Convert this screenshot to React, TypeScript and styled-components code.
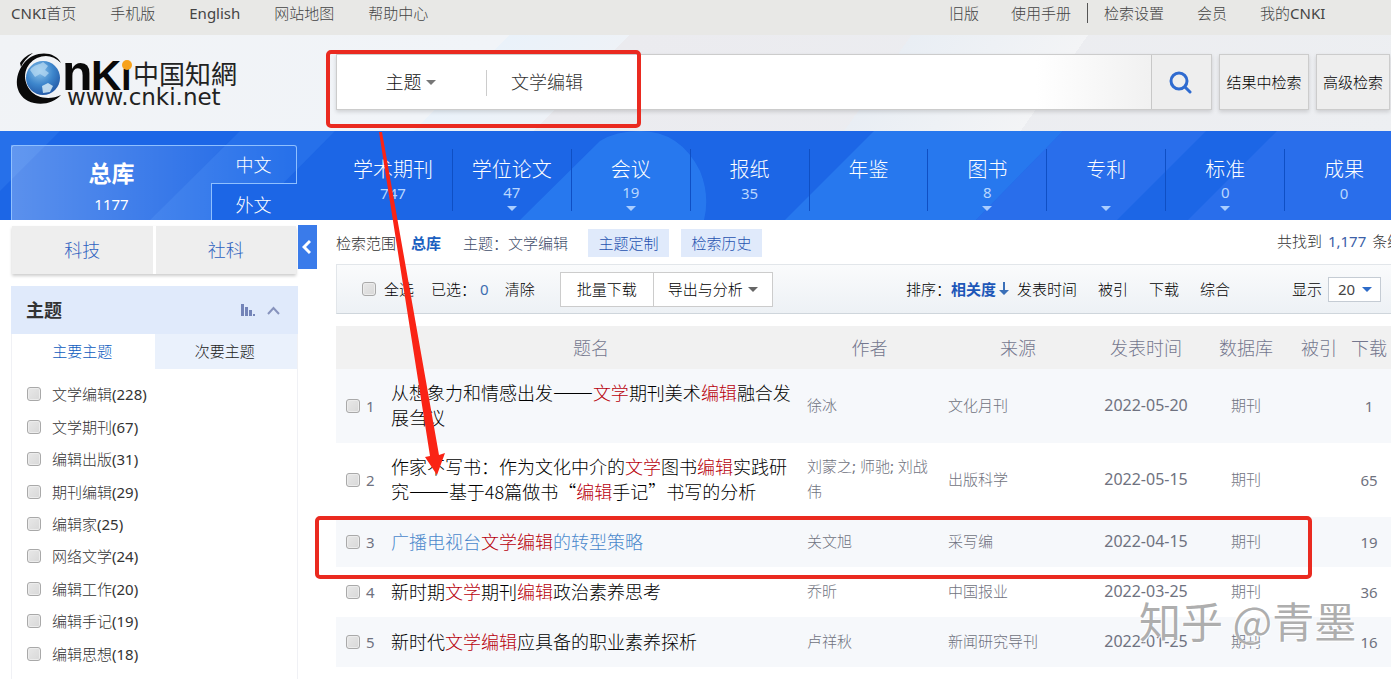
import React from "react";
import styled, { createGlobalStyle, css } from "styled-components";

const boldFamily = `"Noto Sans", "Noto Sans CJK SC", sans-serif`;

const GlobalStyle = createGlobalStyle`
  * { box-sizing: border-box; }
  body {
    margin: 0;
    background: #fff;
    color: #333;
    font-family: "Noto Sans", "Noto Sans CJK SC Light", "Noto Sans CJK SC", sans-serif;
    font-size: 15px;
    line-height: 20px;
  }
  #root { overflow: hidden; }
  button, input, select { font: inherit; color: inherit; }
  button { cursor: pointer; padding: 0; border: 0; background: none; }
  a { color: inherit; text-decoration: none; }
  strong, h2 { font-family: ${boldFamily}; font-weight: 700; }
`;

const Page = styled.div`
  position: relative;
  display: flex;
  flex-direction: column;
  min-width: 1403px;
  min-height: 100vh;
  white-space: nowrap;
`;

/* ---------- top bar ---------- */

const TopBar = styled.div`
  display: flex;
  justify-content: space-between;
  height: 35px;
  padding: 3px 0 0 11px;
  background: #e8e8e6;
  color: #444;
`;

const TopLinks = styled.nav<{ $gap: number }>`
  display: flex;
  gap: ${(p) => p.$gap}px;
  height: 20px;
`;

const TopRight = styled.div`
  display: flex;
  gap: 16px;
  width: 454px;
  height: 20px;
`;

const Rule = styled.span`
  width: 1px;
  background: #555;
`;

/* ---------- header ---------- */

const Header = styled.header`
  display: flex;
  align-items: flex-start;
  height: 96px;
  padding: 19px 13px 0 15px;
  background:
    linear-gradient(125deg, transparent 62%, #e9eef4 62%, #f3f4f6 74%, transparent 74%),
    linear-gradient(135deg, #f1f3f6 0%, #f1f4f8 34%, #eaf2fa 34%, #eef2f7 42%, #ebebef 42%, #edeff2 100%);
`;

const Logo = styled.svg`
  flex: none;
  width: 232px;
  height: 60px;
  margin: -4px 89px 0 0;
  overflow: visible;
`;

const SearchBox = styled.form`
  display: flex;
  flex: 1;
  height: 56px;
  border: 1px solid #ccc;
  background: linear-gradient(90deg, #fff 80%, #f0f0f0 94%);
  box-shadow: 0 2px 4px rgba(0, 0, 0, 0.14);
`;

const FieldPicker = styled.button`
  display: flex;
  align-items: center;
  justify-content: center;
  gap: 4px;
  width: 149px;
  padding-right: 2px;
  color: #111;
  font-size: 18px;
`;

const Caret = styled.span<{ $color: string }>`
  border: 5px solid transparent;
  border-top-color: ${(p) => p.$color};
  border-bottom: 0;
`;

const QueryInput = styled.input`
  flex: 1;
  min-width: 0;
  height: 26px;
  margin-top: 15px;
  padding: 0 24px 4px;
  border: 0;
  border-left: 1px solid #ccc;
  background: none;
  color: #333;
  font-size: 18px;
  outline: none;
`;

const SearchButton = styled.button`
  display: flex;
  align-items: center;
  justify-content: center;
  width: 60px;
  padding-right: 4px;
  border-left: 1px solid #c8c8c8;
  background: #eee;
`;

const SideButton = styled.button<{ $width: number }>`
  width: ${(p) => p.$width}px;
  height: 56px;
  margin-left: 7px;
  border: 1px solid #ccc;
  background: #eee;
  color: #000;
  box-shadow: 0 2px 4px rgba(0, 0, 0, 0.14);
`;

/* ---------- blue navigation ---------- */

const Banner = styled.div`
  position: relative;
  display: flex;
  height: 89px;
  background: #1c66e6;
  color: #fff;
`;

const BannerArt = styled.svg`
  position: absolute;
  inset: 0;
  width: 100%;
  height: 100%;
`;

const TotalBox = styled.div`
  position: relative;
  display: flex;
  width: 286px;
  height: 75px;
  margin: 14px 37px 0 11px;
  background: linear-gradient(90deg, rgba(255, 255, 255, 0.28), rgba(255, 255, 255, 0));
`;

const TotalMain = styled.a`
  display: flex;
  flex-direction: column;
  align-items: center;
  width: 200px;
  padding-top: 14px;
  border: 1px solid #8fc0ff;
  border-width: 1px 0 0 1px;
  border-radius: 3px 0 0 0;

  strong { font-size: 23px; line-height: 26px; }
  span { margin-top: 8px; }
`;

const LangTabs = styled.div`
  flex: 1;
`;

const LangTab = styled.button<{ $active?: boolean }>`
  display: block;
  width: 100%;
  height: ${(p) => (p.$active ? 39 : 36)}px;
  color: #fff;
  font-size: 18px;
  border: 0 solid #8fc0ff;
  ${(p) =>
    p.$active
      ? css`border-width: 1px 1px 1px 0; border-radius: 0 3px 0 0;`
      : css`border-left-width: 1px; background: #1c66e6; padding: 6px 2px 0 0;`}
`;

const DbNav = styled.nav`
  position: relative;
  display: flex;
  flex: 1;
`;

const DbItem = styled.a`
  display: flex;
  flex: 1 1 0;
  flex-direction: column;
  align-items: center;
  height: 62px;
  margin-top: 18px;
  padding-top: 9px;
  color: #b9d7ff;

  & + & { border-left: 1px solid #0f4fc4; }
  b { height: 25px; color: #fff; font-size: 20px; line-height: 24px; font-weight: 400; }
  span { height: 25px; }
  i { border: 5px solid transparent; border-top-color: #a9cdff; border-bottom: 0; }
`;

/* ---------- body ---------- */

const Body = styled.div`
  display: flex;
  flex: 1;
  align-items: stretch;
`;

const Sidebar = styled.aside`
  display: flex;
  flex-direction: column;
  width: 287px;
  margin-left: 11px;
  padding-top: 6px;
`;

const DomainTabs = styled.div`
  display: flex;
  gap: 3px;
  height: 48px;
  margin: 0 2px 12px 1px;
  box-shadow: 0 2px 3px rgba(0, 0, 0, 0.2);

  button { flex: 1; background: #eee; color: #2f62c0; font-size: 18px; }
`;

const Facet = styled.section`
  flex: 1;
  border: 1px solid #f0f1f5;
  border-width: 0 1px;
`;

const FacetHead = styled.div`
  display: flex;
  align-items: center;
  gap: 11px;
  height: 48px;
  margin: 0 -1px;
  padding: 0 18px 0 15px;
  background: #e0eafb;

  h2 { flex: 1; margin: 0; color: #333; font-size: 18px; }
`;

const FacetTabs = styled.div`
  display: flex;
  height: 35px;
`;

const FacetTab = styled.button<{ $active?: boolean }>`
  flex: 1;
  padding: 0 2px 2px 0;
  background: ${(p) => (p.$active ? "#fff" : "#eaf1fc")};
  color: ${(p) => (p.$active ? "#0e5cbe" : "#222")};
`;

const FacetList = styled.ul`
  display: grid;
  grid-auto-rows: 1fr;
  height: 292px;
  margin: 9px 0 0;
  padding: 0 15px;
  list-style: none;

  label { display: flex; align-items: center; height: 100%; }
`;

const Check = styled.input.attrs({ type: "checkbox" })`
  appearance: none;
  flex: none;
  width: 14px;
  height: 14px;
  margin: 0;
  border: 1px solid #a9a9a9;
  border-radius: 3px;
  background: linear-gradient(135deg, #e8e8e8, #d8d8d8);
  box-shadow: inset 0 0 0 1px #ececec;
`;

const FacetText = styled.span`
  margin-left: 11px;
`;

const Collapse = styled.button`
  display: flex;
  align-items: center;
  justify-content: center;
  align-self: flex-start;
  width: 19px;
  height: 44px;
  margin: 5px 19px 0 0;
  padding-right: 2px;
  background: #3a7bea;
`;

const Main = styled.main`
  display: flex;
  flex: 1;
  flex-direction: column;
  min-width: 0;
  padding-right: 7px;
`;

const ScopeRow = styled.div`
  display: flex;
  align-items: center;
  height: 44px;
  padding-top: 2px;
`;

const ScopeTotal = styled.a`
  margin: 0 22px 0 15px;
  color: #1b5fc0;
  font-family: ${boldFamily};
  font-weight: 700;
`;

const ScopeTopic = styled.span`
  margin-right: 8px;
  color: #3f4d6b;
`;

const Chip = styled.button`
  width: 81px;
  height: 28px;
  margin-left: 12px;
  background: #e0eafb;
  color: #1f52b0;
`;

const Found = styled.span`
  width: 119px;
  height: 24px;
  margin-left: auto;

  em { margin: 0 2px; color: #3c5fa8; font-style: normal; }
`;

const ToolBar = styled.div`
  display: flex;
  align-items: center;
  height: 50px;
  margin-right: -7px;
  padding: 0 21px 0 25px;
  border: 1px solid #e2e6ea;
  border-bottom-color: #cfd6dc;
  background: linear-gradient(#fafbfc, #edf1f5);
  color: #000;
`;

const SelectAll = styled.label`
  display: flex;
  align-items: center;
  gap: 8px;
  margin-right: 17px;
`;

const Picked = styled.span`
  margin-right: 16px;

  em { margin-left: 4px; color: #3c6db0; font-style: normal; }
`;

const ToolButtons = styled.div`
  display: flex;
  margin-left: 25px;
`;

const ToolButton = styled.button<{ $width: number }>`
  display: flex;
  align-items: center;
  justify-content: center;
  gap: 5px;
  width: ${(p) => p.$width}px;
  height: 35px;
  margin-right: -1px;
  border: 1px solid #ccc;
  background: #fff;
`;

const SortGroup = styled.div`
  display: flex;
  align-items: center;
  gap: 21px;
  margin: 0 62px 0 auto;
`;

const SortActive = styled.span`
  display: flex;
  align-items: center;
  margin-right: -13px;

  strong { margin-right: 3px; color: #1d57b8; }
`;

const SizePicker = styled.label`
  display: flex;
  align-items: center;
  gap: 6px;
`;

const SizeSelect = styled.span`
  display: flex;
  align-items: center;
  width: 53px;
  height: 25px;
  padding-right: 8px;
  border: 1px solid #c5ccd4;
  background: #fff;
  color: #444;

  select { appearance: none; flex: 1; width: 30px; padding: 0 0 0 9px; border: 0; background: none; outline: none; }
`;

const Results = styled.table`
  width: 100%;
  margin-top: 12px;
  border-collapse: collapse;
  table-layout: fixed;
  color: #6f7280;
`;

const HeadCell = styled.th<{ $width?: number }>`
  width: ${(p) => (p.$width ? `${p.$width}px` : "auto")};
  height: 43px;
  padding: 0;
  background: #f1f1f1;
  color: #74778e;
  font-size: 18px;
  font-weight: 400;
`;

const Row = styled.tr<{ $tall?: boolean }>`
  height: ${(p) => (p.$tall ? 74 : 50)}px;
  background: #fff;

  &:nth-child(odd) { background: #f6f8fb; }
`;

const Cell = styled.td<{ $center?: boolean }>`
  padding: 0 8px 2px;
  line-height: 25px;
  text-align: ${(p) => (p.$center ? "center" : "left")};
  white-space: ${(p) => (p.$center ? "nowrap" : "normal")};
`;

const SelectCell = styled.td`
  padding: 0 0 0 10px;

  label { display: flex; align-items: center; gap: 6px; }
`;

const DateCell = styled(Cell)`
  padding: 0 0 2px;
  font-size: 16px;
`;

const CountCell = styled(Cell)`
  padding: 0;
`;

const Title = styled.a<{ $visited?: boolean }>`
  display: block;
  color: ${(p) => (p.$visited ? "#4a88cc" : "#000")};
  font-family: "Noto Sans CJK SC Light", "Noto Sans CJK SC", sans-serif;
  font-size: 18px;

  mark { background: none; color: #b8000c; }
`;

/* The long dash is set larger so that its two halves span two characters. */
const Dash = styled.span`
  font-size: 24px;
  line-height: 20px;
`;

/* ---------- annotations laid over the page ---------- */

const Frame = styled.div<{ $x: number; $y: number; $w: number; $h: number }>`
  position: absolute;
  left: ${(p) => p.$x}px;
  top: ${(p) => p.$y}px;
  width: ${(p) => p.$w}px;
  height: ${(p) => p.$h}px;
  border: 4px solid #ea2a20;
  border-radius: 5px;
  pointer-events: none;
`;

const Arrow = styled.svg`
  position: absolute;
  left: 370px;
  top: 127px;
  width: 80px;
  height: 350px;
  pointer-events: none;
`;

const Watermark = styled.div`
  position: absolute;
  left: 1139px;
  top: 595px;
  color: rgba(160, 160, 160, 0.85);
  font-family: "Noto Sans CJK SC", sans-serif;
  font-size: 42px;
  line-height: 50px;
  text-shadow: 1px 1px 1px #fff, -1px -1px 0 rgba(255, 255, 255, 0.8);
  pointer-events: none;
`;

/* ---------- data ---------- */

const databases: { name: string; count?: string; more?: boolean }[] = [
  { name: "学术期刊", count: "747" },
  { name: "学位论文", count: "47", more: true },
  { name: "会议", count: "19", more: true },
  { name: "报纸", count: "35" },
  { name: "年鉴" },
  { name: "图书", count: "8", more: true },
  { name: "专利", more: true },
  { name: "标准", count: "0", more: true },
  { name: "成果", count: "0" },
];

const topics: [string, number][] = [
  ["文学编辑", 228],
  ["文学期刊", 67],
  ["编辑出版", 31],
  ["期刊编辑", 29],
  ["编辑家", 25],
  ["网络文学", 24],
  ["编辑工作", 20],
  ["编辑手记", 19],
  ["编辑思想", 18],
];

const columns: [string, number?][] = [
  ["", 47],
  ["题名"],
  ["作者", 141],
  ["来源", 156],
  ["发表时间", 100],
  ["数据库", 100],
  ["被引", 46],
  ["下载", 54],
];

/* Words between asterisks are the highlighted search terms. */
const papers = [
  { title: "从想象力和情感出发——*文学*期刊美术*编辑*融合发展刍议", author: "徐冰", source: "文化月刊", date: "2022-05-20", downloads: 1, tall: true },
  { title: "作家不写书：作为文化中介的*文学*图书*编辑*实践研究——基于48篇做书“*编辑*手记”书写的分析", author: "刘蒙之; 师驰; 刘战伟", source: "出版科学", date: "2022-05-15", downloads: 65, tall: true },
  { title: "广播电视台*文学编辑*的转型策略", author: "关文旭", source: "采写编", date: "2022-04-15", downloads: 19, visited: true },
  { title: "新时期*文学*期刊*编辑*政治素养思考", author: "乔昕", source: "中国报业", date: "2022-03-25", downloads: 36 },
  { title: "新时代*文学编辑*应具备的职业素养探析", author: "卢祥秋", source: "新闻研究导刊", date: "2022-01-25", downloads: 16 },
];

const highlight = (text: string) =>
  text.split(/(\*[^*]+\*|——)/).map((part, i) => {
    if (part === "——") return <Dash key={i}>{part}</Dash>;
    return part.startsWith("*") ? <mark key={i}>{part.slice(1, -1)}</mark> : part;
  });

function CnkiLogo() {
  return (
    <Logo viewBox="0 0 232 60" role="img" aria-label="中国知网">
      <defs>
        <radialGradient id="globe" cx="0.4" cy="0.3" r="0.8">
          <stop offset="0" stopColor="#8fc4ea" />
          <stop offset="0.5" stopColor="#3d86cc" />
          <stop offset="1" stopColor="#1d4f9e" />
        </radialGradient>
      </defs>
      <path d="M46 13 C40 1 20 0 9 13 C-2 27 0 44 13 51 C24 56 38 54 46 45 C36 50 22 49 15 40 C6 28 10 14 22 8 C31 4 39 6 46 13Z" fill="#0a0a0a" />
      <path d="M5 13 C9 7 14 4 18 3 C12 7 8 12 6 17Z" fill="#0a0a0a" />
      <circle cx="28" cy="28" r="17" fill="url(#globe)" />
      <path d="M15 20 C19 14 25 15 28 12 L33 16 L30 20 L34 23 L30 27 L25 24 L20 27Z" fill="#b9dcf3" opacity="0.7" />
      <path d="M27 36 l6 -3 5 3 -3 6 -7 1Z" fill="#d5ebf7" opacity="0.85" />
      <g fill="#0a0a0a" fontFamily="Liberation Sans, sans-serif" fontWeight="700">
        <text x="47" y="40" fontSize="50">n</text>
        <text x="76" y="40" fontSize="42">K</text>
        <text x="106" y="40" fontSize="38">ı</text>
      </g>
      <circle cx="112" cy="15" r="5" fill="#f7a21b" />
      <text x="118" y="34" fill="#222" fontFamily="Noto Sans CJK SC, sans-serif" fontSize="26" fontWeight="400">中国知網</text>
      <text x="52" y="55" fill="#222" fontFamily="DejaVu Sans, sans-serif" fontSize="23">www.cnki.net</text>
    </Logo>
  );
}

export default function App() {
  return (
    <>
      <GlobalStyle />
      <Page>
        <TopBar>
          <TopLinks $gap={34}>
            <a href="#home">CNKI首页</a>
            <a href="#mobile">手机版</a>
            <a href="#en">English</a>
            <a href="#map">网站地图</a>
            <a href="#help">帮助中心</a>
          </TopLinks>
          <TopRight>
            <TopLinks $gap={32}>
              <a href="#old">旧版</a>
              <a href="#manual">使用手册</a>
            </TopLinks>
            <Rule />
            <TopLinks $gap={33}>
              <a href="#settings">检索设置</a>
              <a href="#member">会员</a>
              <a href="#my">我的CNKI</a>
            </TopLinks>
          </TopRight>
        </TopBar>

        <Header>
          <CnkiLogo />
          <SearchBox onSubmit={(e) => e.preventDefault()}>
            <FieldPicker type="button">
              主题 <Caret $color="#777" />
            </FieldPicker>
            <QueryInput aria-label="检索词" defaultValue="文学编辑" />
            <SearchButton type="submit" aria-label="检索">
              <svg width="24" height="24" viewBox="0 0 24 24" fill="none" stroke="#2f6bd0" strokeWidth="3">
                <circle cx="11" cy="11" r="8" />
                <path d="M17 17 L22 22" strokeLinecap="round" />
              </svg>
            </SearchButton>
          </SearchBox>
          <SideButton $width={90}>结果中检索</SideButton>
          <SideButton $width={74}>高级检索</SideButton>
        </Header>

        <Banner>
          <BannerArt viewBox="0 0 1403 89" preserveAspectRatio="none" aria-hidden="true">
            <path d="M0 0H60L0 60Z M240 0H335L247 89H150Z" fill="#2f7aee" opacity="0.5" />
            <path d="M520 89 L600 10 Q616 0 640 0 Q680 0 700 40 Q710 65 704 89Z M785 89 L874 0 H1063 L976 89Z" fill="#2b7df0" opacity="0.8" />
            <path d="M1063 0H1206L1117 89H976Z M1277 0H1403V89H1188Z" fill="#2d70ec" opacity="0.8" />
          </BannerArt>
          <TotalBox>
            <TotalMain href="#all">
              <strong>总库</strong>
              <span>1177</span>
            </TotalMain>
            <LangTabs>
              <LangTab $active>中文</LangTab>
              <LangTab>外文</LangTab>
            </LangTabs>
          </TotalBox>
          <DbNav>
            {databases.map((db) => (
              <DbItem key={db.name} href="#db">
                <b>{db.name}</b>
                <span>{db.count}</span>
                {db.more && <i />}
              </DbItem>
            ))}
          </DbNav>
        </Banner>

        <Body>
          <Sidebar>
            <DomainTabs>
              <button>科技</button>
              <button>社科</button>
            </DomainTabs>
            <Facet>
              <FacetHead>
                <h2>主题</h2>
                <svg width="15" height="14" viewBox="0 0 15 14" fill="#7484b8" aria-hidden="true">
                  <path d="M0 1h3v12H0z M4 4h3v9H4z M8 7h3v6H8z M12 11h2v2h-2z" />
                </svg>
                <svg width="13" height="9" viewBox="0 0 13 9" fill="none" stroke="#8793bd" strokeWidth="2" aria-hidden="true">
                  <path d="M1 8 L6.500 2 L12 8" />
                </svg>
              </FacetHead>
              <FacetTabs>
                <FacetTab $active>主要主题</FacetTab>
                <FacetTab>次要主题</FacetTab>
              </FacetTabs>
              <FacetList>
                {topics.map(([name, count]) => (
                  <li key={name}>
                    <label>
                      <Check />
                      <FacetText>
                        {name}({count})
                      </FacetText>
                    </label>
                  </li>
                ))}
              </FacetList>
            </Facet>
          </Sidebar>
          <Collapse aria-label="收起">
            <svg width="9" height="16" viewBox="0 0 9 16" fill="none" stroke="#fff" strokeWidth="3">
              <path d="M8 2 L2 8 L8 14" />
            </svg>
          </Collapse>

          <Main>
            <ScopeRow>
              <span>检索范围</span>
              <ScopeTotal href="#all">总库</ScopeTotal>
              <ScopeTopic>主题：文学编辑</ScopeTopic>
              <Chip>主题定制</Chip>
              <Chip>检索历史</Chip>
              <Found>
                共找到 <em>1,177</em> 条结果
              </Found>
            </ScopeRow>

            <ToolBar>
              <SelectAll>
                <Check />
                全选
              </SelectAll>
              <Picked>
                已选：<em>0</em>
              </Picked>
              <button>清除</button>
              <ToolButtons>
                <ToolButton $width={94}>批量下载</ToolButton>
                <ToolButton $width={120}>
                  导出与分析 <Caret $color="#666" />
                </ToolButton>
              </ToolButtons>
              <SortGroup>
                <SortActive>
                  排序：<strong>相关度</strong>
                  <svg width="10" height="14" viewBox="0 0 10 14" fill="#3a6fb8" aria-hidden="true">
                    <path d="M4 0h2v8h4L5 13 0 8h4z" />
                  </svg>
                </SortActive>
                <button>发表时间</button>
                <button>被引</button>
                <button>下载</button>
                <button>综合</button>
              </SortGroup>
              <SizePicker>
                显示
                <SizeSelect>
                  <select defaultValue="20">
                    <option>20</option>
                    <option>50</option>
                  </select>
                  <Caret $color="#2d6bc8" />
                </SizeSelect>
              </SizePicker>
            </ToolBar>

            <Results>
              <thead>
                <tr>
                  {columns.map(([label, width], i) => (
                    <HeadCell key={i} $width={width}>
                      {label}
                    </HeadCell>
                  ))}
                </tr>
              </thead>
              <tbody>
                {papers.map((p, i) => (
                  <Row key={p.title} $tall={p.tall}>
                    <SelectCell>
                      <label>
                        <Check />
                        {i + 1}
                      </label>
                    </SelectCell>
                    <Cell>
                      <Title href="#paper" $visited={p.visited}>
                        {highlight(p.title)}
                      </Title>
                    </Cell>
                    <Cell>{p.author}</Cell>
                    <Cell>{p.source}</Cell>
                    <DateCell $center>{p.date}</DateCell>
                    <Cell $center>期刊</Cell>
                    <Cell />
                    <CountCell $center>{p.downloads}</CountCell>
                  </Row>
                ))}
              </tbody>
            </Results>
          </Main>
        </Body>

        <Frame $x={326} $y={50} $w={315} $h={78} />
        <Frame $x={315} $y={516} $w={997} $h={63} />
        <Arrow viewBox="0 0 80 350" aria-hidden="true">
          <path d="M9 5 L12 5 L69 328 L75 326 L67 348 L55 330 L60 329Z" fill="#fa2415" />
        </Arrow>
        <Watermark>知乎 @青墨</Watermark>
      </Page>
    </>
  );
}
